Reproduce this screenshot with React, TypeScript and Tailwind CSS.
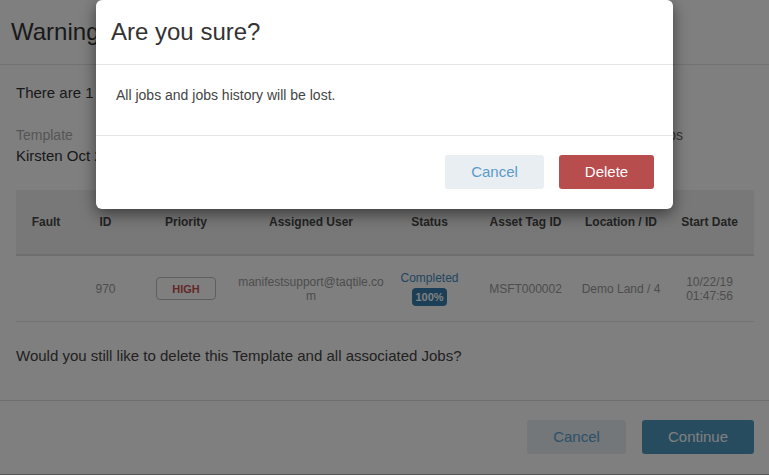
import React from 'react';

const columns = [
  'Fault',
  'ID',
  'Priority',
  'Assigned User',
  'Status',
  'Asset Tag ID',
  'Location / ID',
  'Start Date',
];

const grid = 'grid grid-cols-[60px_59px_102px_148px_89px_103px_88px_89px]';

function JobsTable(): JSX.Element {
  return (
    <div className="mx-4 mt-[24px] w-[738px]">
      <div className={`${grid} h-[66px] border-b-2 border-[#dcdcdc] bg-[#f0f0f0]`}>
        {columns.map((c) => (
          <div
            key={c}
            className="flex items-center justify-center text-center text-[12px] font-bold text-[#474747]"
          >
            {c}
          </div>
        ))}
      </div>
      <div className={`${grid} h-[66px] border-b border-[#e6e6e6] text-[12px] leading-[14px] text-[#9a9a9a]`}>
        <div />
        <div className="flex items-center justify-center">970</div>
        <div className="flex items-center justify-center">
          <span className="flex h-[23px] w-[60px] items-center justify-center rounded-[4px] border border-[#bdbdbd] text-[11px] font-bold text-[#c9504f]">
            HIGH
          </span>
        </div>
        <div className="flex items-center justify-center text-center break-all">
          manifestsupport@taqtile.com
        </div>
        <div className="flex flex-col items-center justify-center">
          <span className="text-[#3f8bc1]">Completed</span>
          <span className="mt-[3px] flex h-[18px] items-center rounded-[4px] bg-[#347eaf] px-[3px] text-[11px] font-bold text-white">
            100%
          </span>
        </div>
        <div className="flex items-center justify-center">MSFT000002</div>
        <div className="flex items-center justify-center">Demo Land / 4</div>
        <div className="flex items-center justify-center text-center">
          10/22/19
          <br />
          01:47:56
        </div>
      </div>
    </div>
  );
}

export default function App(): JSX.Element {
  return (
    <div className="relative h-[475px] w-[769px] overflow-hidden bg-[#aaaaaa] font-['Liberation_Sans',Arial,sans-serif]">
      {/* warning dialog underneath */}
      <div className="flex h-[474px] flex-col bg-white text-[#333]">
        <div className="flex h-[65px] items-center border-b border-[#e5e5e5] px-[11px]">
          <h2 className="text-[24px]">Warning</h2>
        </div>
        <div className="flex h-[336px] flex-col border-b border-[#dedede]">
          <p className="mt-[18px] px-4 text-[15px] leading-[20px]">There are 1 Job</p>
          <div className="mt-[22px] flex px-4">
            <div>
              <div className="text-[14px] leading-[20px] text-[#ababab]">Template</div>
              <div className="mt-[1px] text-[15px] leading-[20px]">Kirsten Oct 22</div>
            </div>
            <div className="ml-auto mr-[70px]">
              <div className="text-[14px] leading-[20px] text-[#666]">Jobs</div>
              <div className="mt-[1px] text-[15px] leading-[20px]">1</div>
            </div>
          </div>
          <JobsTable />
          <p className="mt-[24px] px-4 text-[15px] leading-[20px] text-[#444]">
            Would you still like to delete this Template and all associated Jobs?
          </p>
        </div>
        <div className="flex justify-end gap-4 pr-[15px] pt-[19px]">
          <button className="h-[34px] w-[99px] rounded-[3px] bg-[#e8eef2] text-[15px] text-[#5a9fcf]">
            Cancel
          </button>
          <button className="h-[34px] w-[112px] rounded-[3px] bg-[#4f97bf] text-[15px] text-white">
            Continue
          </button>
        </div>
      </div>

      {/* backdrop */}
      <div className="absolute inset-0 bg-black/50" />

      {/* confirm dialog */}
      <div className="absolute left-[96px] top-0 w-[577px] rounded-[6px] bg-white shadow-[0_5px_15px_rgba(0,0,0,0.5)]">
        <div className="flex h-[65px] items-center border-b border-[#e5e5e5] px-[15px]">
          <h3 className="text-[24px] text-[#333]">Are you sure?</h3>
        </div>
        <div className="h-[71px] border-b border-[#e5e5e5] px-5 pt-[20px]">
          <p className="text-[14px] leading-[20px] text-[#444]">All jobs and jobs history will be lost.</p>
        </div>
        <div className="flex justify-end gap-[15px] pb-[20px] pr-[19px] pt-[19px]">
          <button className="h-[34px] w-[99px] rounded-[3px] bg-[#e9eef2] text-[15px] text-[#5a9bc9]">
            Cancel
          </button>
          <button className="h-[34px] w-[95px] rounded-[3px] bg-[#b84d4d] text-[15px] text-white">
            Delete
          </button>
        </div>
      </div>
    </div>
  );
}
